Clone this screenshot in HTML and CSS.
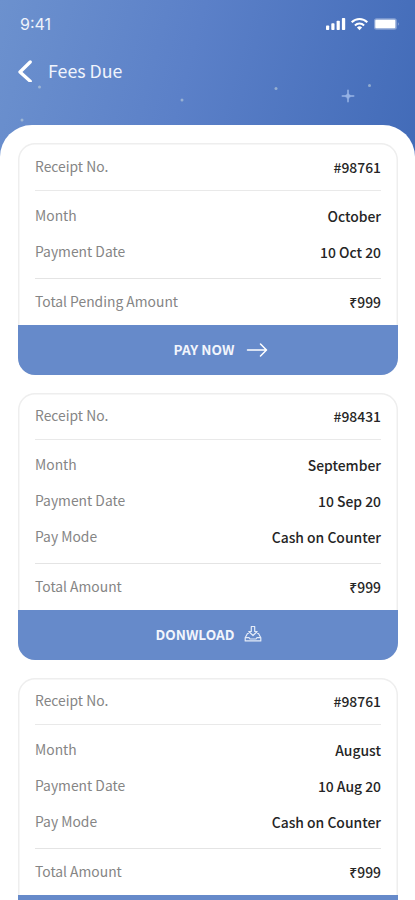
FILE: index.html
```html
<!DOCTYPE html>
<html lang="en">
<head>
<meta charset="utf-8">
<title>Fees Due</title>
<link rel="stylesheet" href="styles.css">
</head>
<body>
<div class="screen">
  <header class="header">
    <svg class="stars" width="415" height="160" viewBox="0 0 415 160">
      <g fill="#b9cbd9" opacity=".65">
        <circle cx="39.500" cy="87" r="1.500"/><circle cx="22" cy="120" r="1.500"/>
        <circle cx="182" cy="100" r="1.500"/><circle cx="276" cy="88.500" r="1.500"/><circle cx="369.500" cy="85.500" r="1.500"/>
      </g>
      <path d="M348 90.500v11M342.500 96h11" fill="none" stroke="#a5bfed" stroke-width="2" stroke-linecap="round" opacity=".65"/>
      <circle cx="348" cy="96" r="2.600" fill="#a5bfed" opacity=".5"/>
    </svg>
    <div class="status">
      <span class="time">9:41</span>
      <svg class="signals" width="76" height="14" viewBox="0 0 76 14" fill="#fff">
        <rect x="0" y="8.500" width="3.200" height="4.500" rx=".8"/><rect x="5.300" y="6.300" width="3.200" height="6.700" rx=".8"/>
        <rect x="10.600" y="3.700" width="3.200" height="9.300" rx=".8"/><rect x="15.900" y="1" width="3.300" height="12" rx=".8"/>
        <g fill="none" stroke="#fff" stroke-width="2"><path d="M25.700 5.300a11 11 0 0 1 15.600 0"/><path d="M28.900 8.500a6.500 6.500 0 0 1 9.200 0"/></g>
        <path d="M30.900 10.500a3.700 3.700 0 0 1 5.200 0l-2.600 2.700z"/>
        <rect x="48" y="1.200" width="22.800" height="11.600" rx="2.500" opacity=".35"/>
        <rect x="49.300" y="2.800" width="20" height="8.400" rx="1"/>
        <path d="M71.800 5.200q1.300.5 1.300 1.800t-1.300 1.800z" opacity=".3"/>
      </svg>
    </div>
    <div class="titlebar">
      <svg width="16" height="24" viewBox="0 0 16 24" fill="none" stroke="#fff" stroke-width="3.300" stroke-linecap="round" stroke-linejoin="round"><path d="M13.200 4L3 14l10.200 9.200"/></svg>
      <h1>Fees Due</h1>
    </div>
  </header>
  <main class="sheet">
    <section class="card first">
      <div class="row head"><span>Receipt No.</span><b>#98761</b></div>
      <div class="details">
        <div class="row"><span>Month</span><b>October</b></div>
        <div class="row"><span>Payment Date</span><b>10 Oct 20</b></div>
      </div>
      <div class="row total"><span>Total Pending Amount</span><b>₹999</b></div>
      <div class="action pay">PAY NOW
        <svg width="22" height="16" viewBox="0 0 22 16" fill="none" stroke="#fff" stroke-width="1.500" stroke-linecap="round" stroke-linejoin="round"><path d="M1.500 9H20M14.500 3l6 6-6 6"/></svg>
      </div>
    </section>
    <section class="card">
      <div class="row head"><span>Receipt No.</span><b>#98431</b></div>
      <div class="details">
        <div class="row"><span>Month</span><b>September</b></div>
        <div class="row"><span>Payment Date</span><b>10 Sep 20</b></div>
        <div class="row"><span>Pay Mode</span><b>Cash on Counter</b></div>
      </div>
      <div class="row total"><span>Total Amount</span><b>₹999</b></div>
      <div class="action download">DONWLOAD
        <svg width="18" height="18" viewBox="0 0 18 18" fill="none" stroke="#e4ebf8" stroke-width="1.200" stroke-linejoin="round"><path d="M7.300 1.500h3.400v5h2.500L9 10.500 4.800 6.500h2.500zM4.800 8.500H3.500L1.200 12.700v3.200h15.600v-3.200L14.500 8.500h-1.300M1.200 12.700H5l1 1.300h6l1-1.300h3.800"/></svg>
      </div>
    </section>
    <section class="card">
      <div class="row head"><span>Receipt No.</span><b>#98761</b></div>
      <div class="details">
        <div class="row"><span>Month</span><b>August</b></div>
        <div class="row"><span>Payment Date</span><b>10 Aug 20</b></div>
        <div class="row"><span>Pay Mode</span><b>Cash on Counter</b></div>
      </div>
      <div class="row total"><span>Total Amount</span><b>₹999</b></div>
      <div class="action"></div>
    </section>
  </main>
</div>
</body>
</html>
```
FILE: styles.css
```css
* { box-sizing: border-box; }
body { margin: 0; font-family: "Noto Sans CJK SC", "Noto Sans", sans-serif; }
.screen {
  width: 415px; height: 900px; overflow: hidden; position: relative;
  display: flex; flex-direction: column;
  background: linear-gradient(105deg, #6c91ce 0, #5b80c8 45%, #426bb8 100%) 0 0 / 415px 160px no-repeat #fff;
}
.header { height: 125px; flex: none; color: #fff; }
.stars { position: absolute; left: 0; top: 0; }
.status { height: 47px; padding: 0 14px 0 20px; display: flex; justify-content: space-between; align-items: center; }
.time { font: 400 16px/20px Inter, sans-serif; color: #eef3fb; }
.signals { margin-right: -1px; }
.titlebar { height: 46px; padding-left: 17px; display: flex; align-items: center; gap: 15px; }
h1 { margin: 0; font-size: 17.800px; font-weight: 400; line-height: 24px; color: #f0f4fc; }
.sheet { flex: 1; min-height: 0; background: #fff; border-radius: 32px 32px 0 0; padding: 18px 17px 0 18px; }
.card {
  height: 267px; margin-bottom: 18px; overflow: hidden; border-radius: 17px;
  box-shadow: inset 0 0 0 1.5px #eee;
  display: flex; flex-direction: column;
}
.first { height: 232px; }
.row { display: flex; justify-content: space-between; align-items: center; font-size: 13.850px; line-height: 20px; color: #858585; }
.row b { font-weight: 500; color: #252525; font-size: 13.900px; position: relative; top: 1px; }
.head { height: 47px; margin: 0 17px; padding-bottom: 2px; border-bottom: 1.5px solid #e9e9e9; }
.first .head { height: 48px; }
.details { flex: 1; padding: 6.500px 17px 9.500px; display: flex; flex-direction: column; }
.details .row { flex: 1; }
.total { height: 47px; margin: 0 17px; padding-bottom: 2px; border-top: 1.5px solid #e4e4e4; }
.action {
  height: 50px; flex: none; background: #668aca; color: #f2f5fc;
  font: 700 13.600px/20px "Noto Sans CJK SC", sans-serif; padding-bottom: 3px;
  display: flex; align-items: center; justify-content: center; gap: 12px;
}
.pay { padding-left: 26px; }
.download { gap: 10px; padding-left: 2px; }
```
